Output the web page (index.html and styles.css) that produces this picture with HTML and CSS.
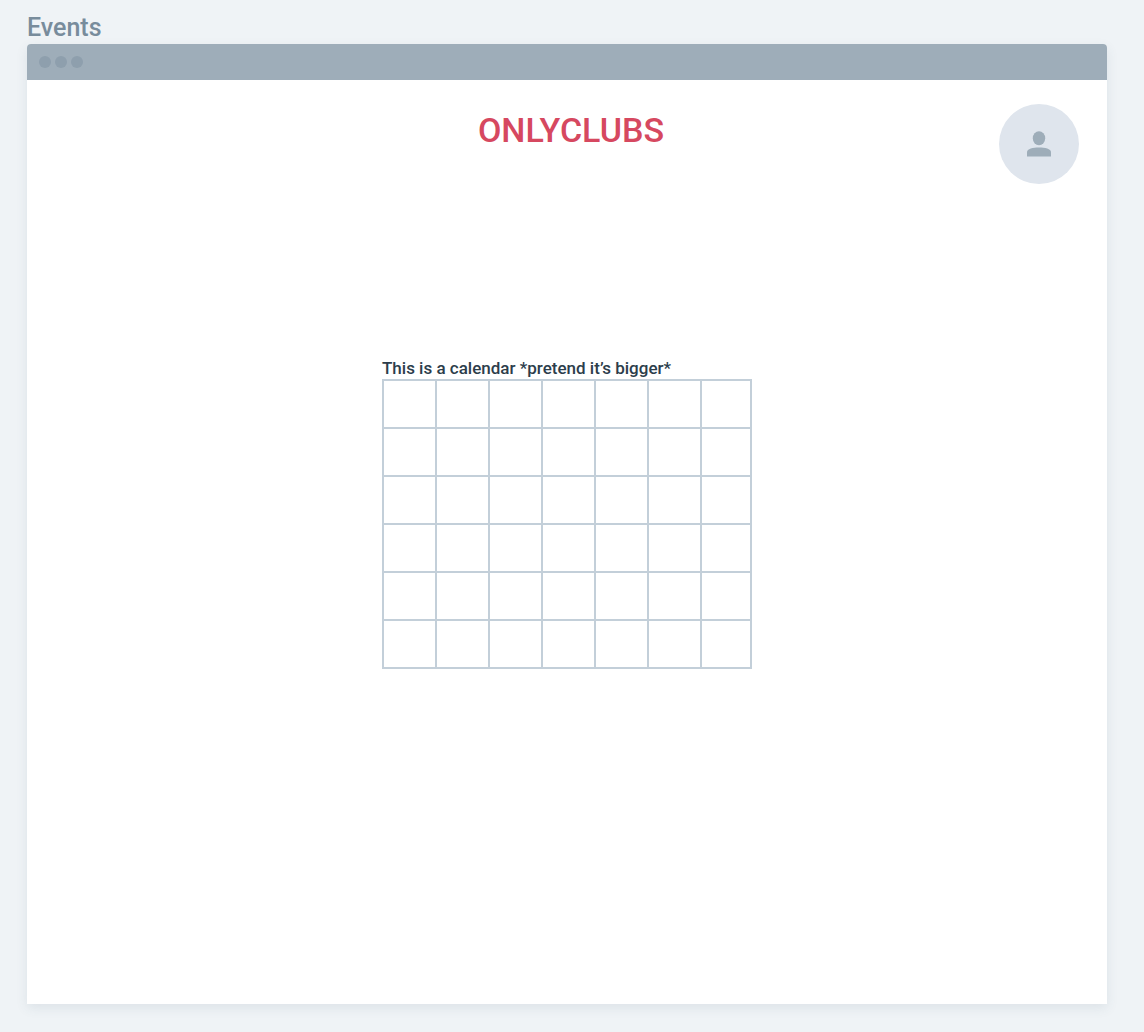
FILE: index.html
```html
<!DOCTYPE html>
<html lang="en">
<head>
<meta charset="utf-8">
<meta name="viewport" content="width=device-width, initial-scale=1">
<title>Events</title>
<link rel="stylesheet" href="styles.css">
</head>
<body>
<h2 class="board-title">Events</h2>
<div class="window">
  <div class="window-bar">
    <span class="dot"></span><span class="dot"></span><span class="dot"></span>
  </div>
  <header class="header">
    <h1 class="brand">ONLYCLUBS</h1>
    <button class="avatar" type="button" aria-label="Profile">
      <svg width="24" height="26" viewBox="0 0 24 26" aria-hidden="true">
        <ellipse cx="12" cy="7.2" rx="6.2" ry="7"/>
        <path d="M0 25.5v-4.2C0 18 6 16.6 12 16.6s12 1.4 12 4.7v4.2z"/>
      </svg>
    </button>
  </header>
  <main class="content">
    <table class="calendar">
      <caption>This is a calendar *pretend it’s bigger*</caption>
      <colgroup><col class="day" span="6"><col class="day-last"></colgroup>
      <tbody>
        <tr><td></td><td></td><td></td><td></td><td></td><td></td><td></td></tr>
        <tr><td></td><td></td><td></td><td></td><td></td><td></td><td></td></tr>
        <tr><td></td><td></td><td></td><td></td><td></td><td></td><td></td></tr>
        <tr><td></td><td></td><td></td><td></td><td></td><td></td><td></td></tr>
        <tr><td></td><td></td><td></td><td></td><td></td><td></td><td></td></tr>
        <tr><td></td><td></td><td></td><td></td><td></td><td></td><td></td></tr>
      </tbody>
    </table>
  </main>
</div>
</body>
</html>
```
FILE: styles.css
```css
* {
  box-sizing: border-box;
}

body {
  display: flex;
  flex-direction: column;
  min-height: 100vh;
  margin: 0;
  padding: 12px 37px 28px 27px;
  background: #eff3f6;
  color: #2c3d4b;
  font-family: Roboto, "Liberation Sans", sans-serif;
  font-weight: 500;
}

.board-title {
  margin: 0;
  color: #788c9c;
  font-size: 25px;
  font-weight: 500;
  line-height: 32px;
}

.window {
  flex: 1;
  border-radius: 4px 4px 0 0;
  background: #fff;
  box-shadow: 0 4px 12px rgba(60, 90, 110, 0.1);
}

.window-bar {
  display: flex;
  align-items: center;
  gap: 4px;
  height: 36px;
  padding: 0 12px;
  border-radius: 4px 4px 0 0;
  background: #9eadb9;
}

.dot {
  width: 12px;
  height: 12px;
  border-radius: 50%;
  background: #8e9fad;
}

.header {
  display: grid;
  grid-template-columns: 1fr auto 1fr;
  align-items: start;
  padding: 24px 28px 0 36px;
}

.brand {
  grid-column: 2;
  margin: 0;
  color: #d64860;
  font-size: 34px;
  font-weight: 500;
  line-height: 52px;
}

.avatar {
  display: grid;
  place-items: center;
  justify-self: end;
  width: 80px;
  height: 80px;
  padding: 0;
  border: 0;
  border-radius: 50%;
  background: #dfe5ed;
  fill: #9eadb9;
}

.content {
  display: flex;
  justify-content: center;
  padding: 173px 24px 24px;
}

.calendar {
  width: 370px;
  table-layout: fixed;
  border-collapse: collapse;
}

.calendar caption {
  font-size: 17px;
  line-height: 22px;
  text-align: left;
  white-space: nowrap;
}

.day {
  width: 53px;
}

.day-last {
  width: 50px;
}

.calendar td {
  height: 48px;
  padding: 0;
  border: 2px solid #c3cfd9;
}
```
